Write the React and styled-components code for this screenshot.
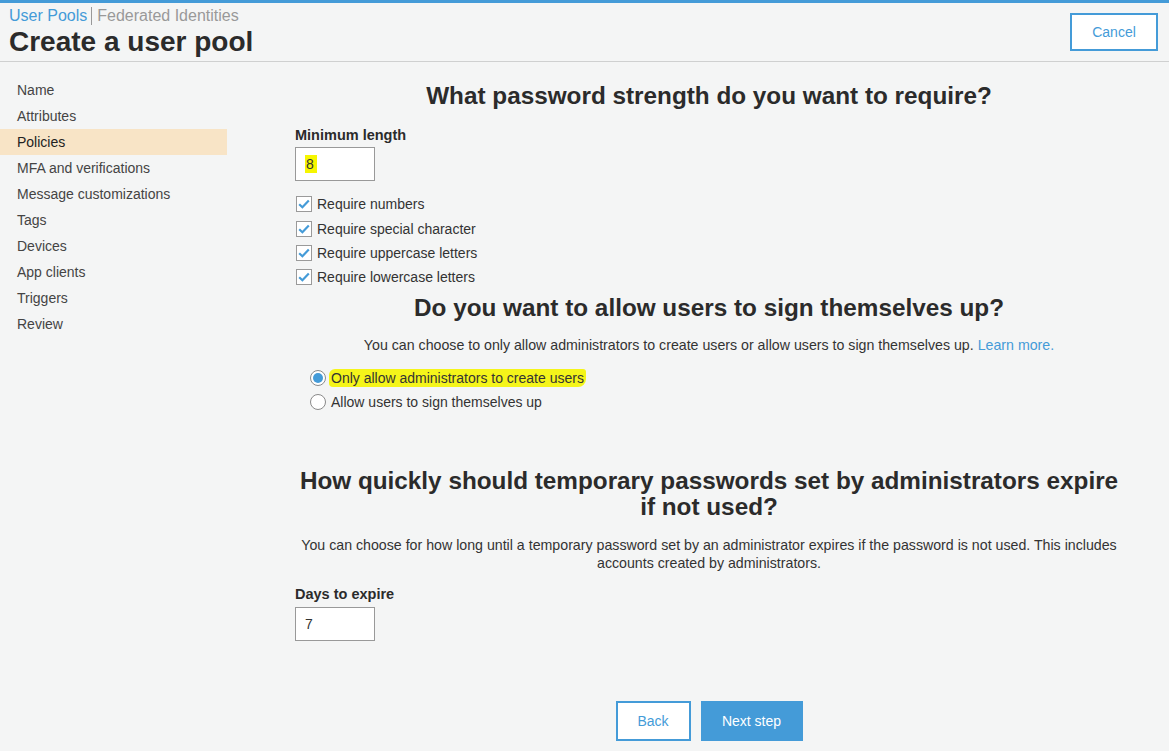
import styled, { createGlobalStyle } from "styled-components";

const GlobalStyle = createGlobalStyle`
  html, body {
    margin: 0;
    padding: 0;
    background: #f4f5f5;
    font-family: "Liberation Sans", Arial, sans-serif;
    color: #333;
  }
`;

const BLUE = "#449bd8";

const Page = styled.div`
  min-height: 751px;
  border-top: 3px solid ${BLUE};
  box-sizing: border-box;
`;

const Header = styled.header`
  display: flex;
  justify-content: space-between;
  align-items: flex-start;
  padding: 3px 11px 3px 9px;
  border-bottom: 1px solid #cfd0d0;
`;

const Breadcrumb = styled.div`
  display: flex;
  align-items: center;
  font-size: 16px;
  line-height: 20px;
`;

const Crumb = styled.a`
  color: ${(p) => (p.$active ? BLUE : "#999")};
  text-decoration: none;
`;

const Sep = styled.span`
  width: 1px;
  height: 18px;
  margin: 0 5px 0 4px;
  background: #999;
`;

const Title = styled.h1`
  margin: 0;
  font-size: 28px;
  line-height: 32px;
  font-weight: bold;
  color: #2b2b2b;
`;

const OutlineButton = styled.button`
  box-sizing: border-box;
  height: ${(p) => p.$h || 40}px;
  width: ${(p) => p.$w}px;
  margin-top: ${(p) => p.$mt || 0}px;
  border: 2px solid ${BLUE};
  background: #fff;
  color: ${BLUE};
  font-family: inherit;
  font-size: 14px;
  cursor: pointer;
`;

const PrimaryButton = styled.button`
  box-sizing: border-box;
  height: 40px;
  width: ${(p) => p.$w}px;
  border: none;
  background: ${BLUE};
  color: #fff;
  font-family: inherit;
  font-size: 14px;
  cursor: pointer;
`;

const Body = styled.div`
  display: flex;
`;

const Sidebar = styled.nav`
  width: 227px;
  padding-top: 15px;
  flex-shrink: 0;
`;

const NavItem = styled.div`
  height: 26px;
  line-height: 26px;
  padding-left: 17px;
  font-size: 14px;
  color: ${(p) => (p.$active ? "#222" : "#444")};
  background: ${(p) => (p.$active ? "#f8e4c6" : "transparent")};
`;

const Main = styled.main`
  flex: 1;
  padding: 21px 46px 10px 68px;
  display: flex;
  flex-direction: column;
`;

const Heading = styled.h2`
  margin: ${(p) => p.$mt || 0}px auto 0;
  max-width: 828px;
  text-align: center;
  font-size: 24.3px;
  line-height: 26px;
  font-weight: bold;
  color: #2b2b2b;
`;

const Para = styled.p`
  margin: ${(p) => p.$mt || 0}px 0 0;
  text-align: center;
  font-size: 14.2px;
  line-height: 18px;
  color: #333;
`;

const Link = styled.a`
  color: ${BLUE};
  text-decoration: none;
`;

const Label = styled.div`
  margin-top: ${(p) => p.$mt || 0}px;
  font-size: 14.5px;
  line-height: 18px;
  font-weight: bold;
  color: #2b2b2b;
`;

const Input = styled.div`
  box-sizing: border-box;
  margin-top: ${(p) => p.$mt || 0}px;
  width: 80px;
  height: 34px;
  border: 1px solid #999;
  background: #fff;
  padding-left: 9px;
  display: flex;
  align-items: center;
  font-size: 14px;
`;

const Marked = styled.span`
  background: #f6f600;
  padding: 1px 3px 1px 1px;
`;

const CheckList = styled.div`
  margin-top: 11px;
  display: flex;
  flex-direction: column;
`;

const CheckRow = styled.label`
  display: flex;
  align-items: center;
  gap: 5px;
  height: 24.4px;
  font-size: 14px;
  color: #333;
  padding-left: 1px;
`;

const Box = styled.span`
  box-sizing: border-box;
  width: 16px;
  height: 16px;
  border: 1px solid #9a9a9a;
  background: #fff;
  display: flex;
  align-items: center;
  justify-content: center;
`;

const RadioList = styled.div`
  margin-top: 12px;
  padding-left: 15px;
  display: flex;
  flex-direction: column;
`;

const RadioRow = styled.label`
  display: flex;
  align-items: center;
  gap: 5px;
  height: 24px;
  font-size: 14px;
  color: #333;
`;

const Circle = styled.span`
  box-sizing: border-box;
  width: 16px;
  height: 16px;
  border-radius: 50%;
  border: 1px solid #8a8a8a;
  background: #fff;
  display: flex;
  align-items: center;
  justify-content: center;
  &::after {
    content: "";
    display: ${(p) => (p.$on ? "block" : "none")};
    width: 10px;
    height: 10px;
    border-radius: 50%;
    background: ${BLUE};
  }
`;

const Highlight = styled.span`
  background: #f5f51a;
  border-radius: 6px 3px 8px 4px;
  padding: 1px 2px;
  margin-left: -2px;
`;

const Actions = styled.div`
  margin-top: 60px;
  display: flex;
  justify-content: center;
  gap: 10px;
`;

const Check = () => (
  <Box>
    <svg width="12" height="10" viewBox="0 0 12 10">
      <path d="M1.2 5.2 L4.4 8.2 L10.8 1.6" fill="none" stroke={BLUE} strokeWidth="2.2" />
    </svg>
  </Box>
);

const navItems = [
  "Name",
  "Attributes",
  "Policies",
  "MFA and verifications",
  "Message customizations",
  "Tags",
  "Devices",
  "App clients",
  "Triggers",
  "Review",
];

const rules = [
  "Require numbers",
  "Require special character",
  "Require uppercase letters",
  "Require lowercase letters",
];

export default function App() {
  return (
    <Page>
      <GlobalStyle />
      <Header>
        <div>
          <Breadcrumb>
            <Crumb $active>User Pools</Crumb>
            <Sep />
            <Crumb>Federated Identities</Crumb>
          </Breadcrumb>
          <Title>Create a user pool</Title>
        </div>
        <OutlineButton $w={88} $h={38} $mt={7}>Cancel</OutlineButton>
      </Header>
      <Body>
        <Sidebar>
          {navItems.map((n) => (
            <NavItem key={n} $active={n === "Policies"}>{n}</NavItem>
          ))}
        </Sidebar>
        <Main>
          <Heading>What password strength do you want to require?</Heading>
          <Label $mt={17}>Minimum length</Label>
          <Input $mt={3}><Marked>8</Marked></Input>
          <CheckList>
            {rules.map((r) => (
              <CheckRow key={r}>
                <Check />
                {r}
              </CheckRow>
            ))}
          </CheckList>
          <Heading $mt={5}>Do you want to allow users to sign themselves up?</Heading>
          <Para $mt={15}>
            You can choose to only allow administrators to create users or allow users to sign themselves up.{" "}
            <Link>Learn more.</Link>
          </Para>
          <RadioList>
            <RadioRow>
              <Circle $on />
              <Highlight>Only allow administrators to create users</Highlight>
            </RadioRow>
            <RadioRow>
              <Circle />
              Allow users to sign themselves up
            </RadioRow>
          </RadioList>
          <Heading $mt={54}>
            How quickly should temporary passwords set by administrators expire if not used?
          </Heading>
          <Para $mt={16}>
            You can choose for how long until a temporary password set by an administrator expires if the password is not used. This includes accounts created by administrators.
          </Para>
          <Label $mt={13}>Days to expire</Label>
          <Input $mt={4}>7</Input>
          <Actions>
            <OutlineButton $w={75}>Back</OutlineButton>
            <PrimaryButton $w={102}>Next step</PrimaryButton>
          </Actions>
        </Main>
      </Body>
    </Page>
  );
}
